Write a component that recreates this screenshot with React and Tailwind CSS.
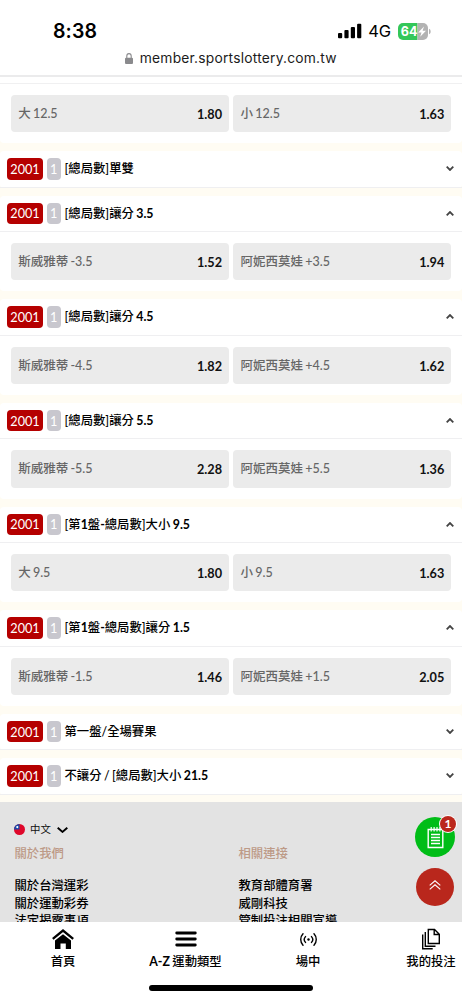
import React from "react";

const markets = [
  { title: "[總局數]單雙" },
  { title: "[總局數]讓分 3.5", odds: [["斯威雅蒂 -3.5", "1.52"], ["阿妮西莫娃 +3.5", "1.94"]] },
  { title: "[總局數]讓分 4.5", odds: [["斯威雅蒂 -4.5", "1.82"], ["阿妮西莫娃 +4.5", "1.62"]] },
  { title: "[總局數]讓分 5.5", odds: [["斯威雅蒂 -5.5", "2.28"], ["阿妮西莫娃 +5.5", "1.36"]] },
  { title: "[第1盤-總局數]大小 9.5", odds: [["大 9.5", "1.80"], ["小 9.5", "1.63"]] },
  { title: "[第1盤-總局數]讓分 1.5", odds: [["斯威雅蒂 -1.5", "1.46"], ["阿妮西莫娃 +1.5", "2.05"]] },
  { title: "第一盤/全場賽果" },
  { title: "不讓分 / [總局數]大小 21.5" },
];

const footerColumns = [
  { heading: "關於我們", links: ["關於台灣運彩", "關於運動彩券", "法定揭露事項"] },
  { heading: "相關連接", links: ["教育部體育署", "威剛科技", "管制投注相關宣導"] },
];

// Sets the digits and Latin letters of a mixed label in a heavier face.
function Mixed({ text }) {
  return text.split(/([0-9A-Z.+-]+)/).map((part, i) =>
    i % 2 ? <span key={i} className="font-bold">{part}</span> : part
  );
}

function Chevron({ up }) {
  return (
    <svg className="h-[5px] w-2" viewBox="0 0 8 5" fill="none" stroke="#444" strokeWidth="1.8">
      {up ? <path d="M.7 4.3 4 1l3.3 3.3" /> : <path d="M.7.7 4 4 7.3.7" />}
    </svg>
  );
}

function OddsRow({ odds }) {
  return (
    <div className="grid grid-cols-2 gap-1 px-[10.67px] py-[11px]">
      {odds.map(([label, price]) => (
        <div key={label} className="flex h-[37.33px] items-center justify-between rounded bg-[#ebebeb] pt-[1.5px] pr-[7px] pl-[7.5px] text-[12.5px] whitespace-nowrap">
          <span className="font-medium text-[#666] [word-spacing:-0.9px]">{label}</span>
          <span className="text-[12.7px] font-bold text-[#111]">{price}</span>
        </div>
      ))}
    </div>
  );
}

function Market({ title, odds }) {
  return (
    <section className="mb-2 rounded bg-white">
      <div className="flex h-[36.33px] items-center border-b border-[#efeff1] pr-2 pl-[7px]">
        <span className="flex h-[21.5px] w-9 items-center justify-center rounded bg-[#b50000] pt-px text-[12.7px] text-white">2001</span>
        <span className="ml-[3.5px] flex h-[21.5px] w-[14.5px] items-center justify-center rounded bg-[#c8c7ce] pt-px text-[12.7px] text-white">1</span>
        <h2 className="ml-[3.5px] flex-1 pt-[1.5px] text-[12.35px] font-medium whitespace-nowrap text-black [word-spacing:-0.7px]">
          <Mixed text={title} />
        </h2>
        <Chevron up={Boolean(odds)} />
      </div>
      {odds && <OddsRow odds={odds} />}
    </section>
  );
}

function StatusBar() {
  return (
    <header className="h-[77px] shrink-0 border-b-2 border-[#ebebec] bg-white font-[Inter,'Liberation_Sans',sans-serif]">
      <div className="flex h-[46px] items-end justify-between pr-[31px] pl-[53px]">
        <span className="mb-[3px] text-[19.5px] leading-6 font-semibold tracking-[0.1px] text-black">8:38</span>
        <div className="mb-[5px] flex items-center">
          <svg className="h-4 w-6" viewBox="0 0 24 16">
            <rect x="0" y="10" width="4.2" height="5.3" rx="1" />
            <rect x="6.4" y="7" width="4.2" height="8.3" rx="1" />
            <rect x="12.8" y="4" width="4.2" height="11.3" rx="1" />
            <rect x="19.1" y=".7" width="4.2" height="14.6" rx="1" />
          </svg>
          <span className="ml-[6px] text-[16.5px] leading-5 tracking-[-0.1px] text-black">4G</span>
          <svg className="ml-[7px] h-[17px] w-[33px]" viewBox="0 0 33 17">
            <path d="M5 0h14.5v17H5a5 5 0 0 1-5-5V5a5 5 0 0 1 5-5Z" fill="#34c759" />
            <path d="M19.5 0H25a5 5 0 0 1 5 5v7a5 5 0 0 1-5 5h-5.5Z" fill="#b3b3b3" />
            <path d="M31 5.7c2.2.8 2.2 4.8 0 5.6Z" fill="#b3b3b3" />
            <text x="2.8" y="13.4" fontSize="13.6" fontWeight="700" fill="#fff" textLength="16.6" lengthAdjust="spacingAndGlyphs">64</text>
            <path d="m26 3.5-5.8 5.9h3.3l-1.3 4.4 5.8-6h-3.4Z" fill="#fff" />
          </svg>
        </div>
      </div>
      <div className="flex h-[25px] items-center justify-center">
        <svg className="mr-[6.5px] h-[11px] w-2" viewBox="0 0 8 11">
          <path d="M1.8 5.5V3a2.2 2.4 0 0 1 4.4 0v2.5" fill="none" stroke="#8a8a8d" strokeWidth="1.1" />
          <rect y="4.8" width="8" height="6.2" rx="1.1" fill="#8a8a8d" />
        </svg>
        <span className="text-[13.8px] tracking-[0.22px] text-[#1b1b1b]">member.sportslottery.com.tw</span>
      </div>
    </header>
  );
}

function Footer() {
  return (
    <footer className="-mt-[0.5px] h-[200px] bg-[#e3e3e3] px-[14px] pt-[19.5px]">
      <div className="flex h-4 items-center">
        <svg className="h-[11px] w-[11px]" viewBox="0 0 11 11">
          <circle cx="5.5" cy="5.5" r="5.5" fill="#df082b" />
          <path d="M0 5.5A5.5 5.5 0 0 1 5.5 0v5.5Z" fill="#174cac" />
          <circle cx="3.3" cy="3.1" r="1.1" fill="#fff" />
        </svg>
        <span className="ml-[5px] text-[10.4px] text-[#111]">中文</span>
        <svg className="ml-[6px] h-[6px] w-[11px]" viewBox="0 0 11 6" fill="none" stroke="#000" strokeWidth="1.9">
          <path d="m.7.7 4.8 4.2L10.3.7" />
        </svg>
      </div>
      <div className="mt-[7px] grid grid-cols-[224px_1fr]">
        {footerColumns.map(({ heading, links }) => (
          <div key={heading} className="pl-[0.5px]">
            <h3 className="text-[12.35px] leading-[18px] font-medium text-[#bd9a87]">{heading}</h3>
            <ul className="mt-[14.3px] text-[12.35px] leading-[17.7px] font-medium whitespace-nowrap text-black">
              {links.map((link) => <li key={link}>{link}</li>)}
            </ul>
          </div>
        ))}
      </div>
    </footer>
  );
}

function FloatingButtons() {
  return (
    <>
      <button className="absolute top-[817px] left-[415px] flex h-10 w-10 items-center justify-center rounded-full bg-[#00bd17]">
        <svg className="h-[23px] w-[17px]" viewBox="0 0 17 23" fill="none" stroke="#fff">
          <path d="M1.2 3.5h14.6v18H1.2Z" strokeWidth="1.4" />
          <path d="M4.2 1v4.5M7.1 1v4.5M10 1v4.5M12.9 1v4.5" strokeWidth="1.2" />
          <path d="M4 8.5h9M4 11.5h9M4 14.5h9M4 17.5h9" strokeWidth="1.3" />
        </svg>
      </button>
      <span className="absolute top-[816px] left-[440px] flex h-4 w-4 items-center justify-center rounded-full bg-[#bb271c] text-[12px] font-bold text-white ring-1 ring-white">1</span>
      <button className="absolute top-[868px] left-[416px] flex h-[38px] w-[38px] items-center justify-center rounded-full bg-[#b9271c]">
        <svg className="mb-1 h-[10px] w-3" viewBox="0 0 12 10" fill="none" stroke="#fff" strokeWidth="1.1">
          <path d="m.7 5.3 5.3-4.5 5.3 4.5M.7 9.3 6 4.8l5.3 4.5" />
        </svg>
      </button>
    </>
  );
}

function NavItem({ label, children }) {
  return (
    <a className="flex flex-col items-center text-[12.35px] leading-[18px] font-medium whitespace-nowrap text-black">
      <span className="mb-[3px] flex h-[22px] items-center">{children}</span>
      <span className="[word-spacing:-0.7px]"><Mixed text={label} /></span>
    </a>
  );
}

function BottomNav() {
  return (
    <nav className="h-[78px] shrink-0 bg-white">
      <div className="grid h-[62.5px] grid-cols-[126px_119px_126px_120px] pt-[6px]">
        <NavItem label="首頁">
          <svg className="h-[20px] w-[22px]" viewBox="0 0 22 20">
            <path d="M.8 9.9 11 1.6l10.2 8.3" fill="none" stroke="#000" strokeWidth="2.3" />
            <path d="M3 11.6 11 5.2l8 6.4V20h-5.2v-5.4H8.5V20H3Z" />
          </svg>
        </NavItem>
        <NavItem label="A-Z 運動類型">
          <svg className="h-4 w-[22px]" viewBox="0 0 22 16" stroke="#000" strokeWidth="2.8" strokeLinecap="round">
            <path d="M1.7 2h18.6M1.7 8h18.6M1.7 14h18.6" />
          </svg>
        </NavItem>
        <NavItem label="場中">
          <svg className="h-[13px] w-[17px]" viewBox="0 0 17 13" fill="none" stroke="#000" strokeWidth="1.4" strokeLinecap="round">
            <path d="M3 .8a8.3 8.3 0 0 0 0 11.4M5.5 3.6a4.3 4.3 0 0 0 0 5.8M14 .8a8.3 8.3 0 0 1 0 11.4M11.5 3.6a4.3 4.3 0 0 1 0 5.8" />
            <circle cx="8.5" cy="6.5" r="1.2" fill="#000" stroke="none" />
          </svg>
        </NavItem>
        <NavItem label="我的投注">
          <svg className="h-[22px] w-[18px]" viewBox="0 0 18 22" fill="none" stroke="#000" strokeWidth="1.4">
            <path d="M6.3 1.5h6.2l4.8 4.8v9.2h-11ZM12.2 1.5v5h5M3.3 4v14.2h10.2M.7 6.5v14.3h10" />
          </svg>
        </NavItem>
      </div>
      <div className="mx-[149px] h-[6px] rounded-full bg-black" />
    </nav>
  );
}

export default function App() {
  return (
    <div lang="zh-TW" className="relative flex h-[1000px] w-[462px] flex-col overflow-hidden bg-white font-[Lato,'Noto_Sans_CJK_TC',sans-serif]">
      <StatusBar />
      <main className="min-h-0 flex-1 overflow-hidden bg-[#fffcf3]">
        <section className="mb-2 rounded-b bg-white">
          <div className="h-[7px] border-b border-[#f0f0f1]" />
          <OddsRow odds={[["大 12.5", "1.80"], ["小 12.5", "1.63"]]} />
        </section>
        {markets.map((market) => <Market key={market.title} {...market} />)}
        <Footer />
      </main>
      <BottomNav />
      <FloatingButtons />
    </div>
  );
}
